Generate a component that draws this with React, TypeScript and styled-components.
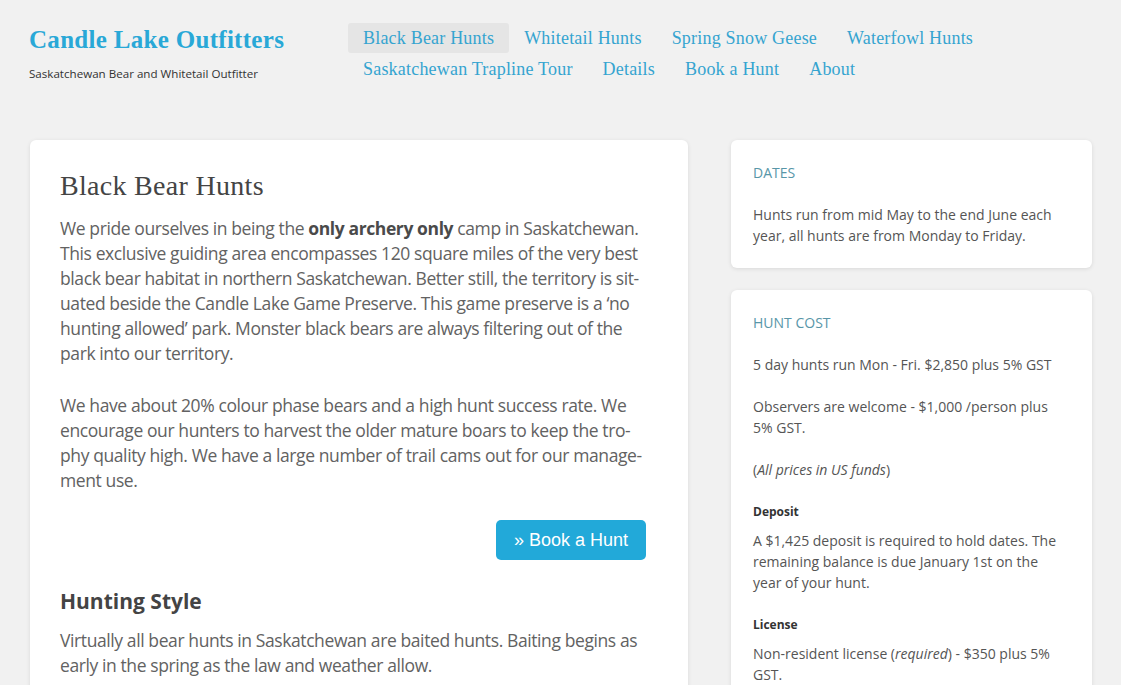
import styled, { createGlobalStyle } from 'styled-components'

const GlobalStyle = createGlobalStyle`
  html, body {
    margin: 0;
    padding: 0;
    background-color: #f1f1f1;
  }
  body {
    font-family: 'Open Sans', 'DejaVu Sans', sans-serif;
    color: #555;
  }
`

const StyledPage = styled.div`
  padding: 0 29px 0 30px;
`

const StyledHeader = styled.header`
  display: flex;
  align-items: flex-start;
  height: 140px;
`

const StyledBrand = styled.div`
  width: 318px;
  padding-top: 25px;
`

const StyledLogo = styled.a`
  display: block;
  margin-left: -1px;
  color: #29a8d7;
  font-family: 'Liberation Serif', serif;
  font-weight: 700;
  font-size: 25px;
  letter-spacing: 0.3px;
  line-height: 30px;
  text-decoration: none;
`

const StyledTagline = styled.p`
  margin: 11px 0 0 -1px;
  color: #333;
  font-size: 11.6px;
  font-stretch: 90%;
  line-height: 16px;
`

const StyledNav = styled.nav`
  display: flex;
  flex-wrap: wrap;
  row-gap: 1px;
  width: 744px;
  padding-top: 23px;
`

const StyledNavLink = styled.a<{ $active?: boolean }>`
  display: block;
  padding: 0 15px;
  border-radius: 3px;
  background-color: ${(props) => (props.$active ? '#e5e5e5' : 'transparent')};
  color: #35a4d0;
  font-family: 'Liberation Serif', serif;
  font-size: 18px;
  letter-spacing: 0.2px;
  line-height: 30px;
  text-decoration: none;
`

const StyledLayout = styled.div`
  display: grid;
  grid-template-columns: 658px 361px;
  column-gap: 43px;
  align-items: start;
`

const StyledCard = styled.article`
  border-radius: 6px;
  background-color: #fff;
  box-shadow: 0 1px 4px hsla(0, 0%, 0%, 0.1);
`

const StyledMain = styled(StyledCard)`
  padding: 28px 42px 40px 30px;
  min-height: 600px;
`

const StyledTitle = styled.h1`
  margin: 0 0 12px;
  color: #444;
  font-family: 'Liberation Serif', serif;
  font-weight: 400;
  font-size: 28px;
  letter-spacing: 0.3px;
  line-height: 36px;
`

const StyledText = styled.p`
  margin: 0 0 27px;
  color: #626262;
  font-size: 17.5px;
  letter-spacing: -0.4px;
  line-height: 25px;

  strong {
    color: #4a4a4a;
    font-weight: 700;
  }
`

const StyledAction = styled.div`
  display: flex;
  justify-content: flex-end;
  margin: 0 0 26px;
`

const StyledButton = styled.a`
  display: inline-block;
  padding: 0 18px;
  border-radius: 5px;
  background-color: #22a9d9;
  color: #fff;
  font-family: 'Liberation Sans', Arial, sans-serif;
  font-size: 18px;
  line-height: 40px;
  text-decoration: none;
`

const StyledSubtitle = styled.h2`
  margin: 0 0 12px;
  color: #444;
  font-size: 21px;
  font-weight: 700;
  line-height: 30px;
`

const StyledSidebar = styled.aside`
  display: flex;
  flex-direction: column;
  gap: 22px;
`

const StyledWidget = styled(StyledCard)`
  padding: 22px 24px 1px 22px;
`

const StyledWidgetTitle = styled.h3`
  margin: 0 0 21px;
  color: #5896a8;
  font-weight: 400;
  font-size: 14px;
  line-height: 21px;
  text-transform: uppercase;
`

const StyledWidgetText = styled.p`
  margin: 0 0 21px;
  color: #555;
  font-size: 14px;
  line-height: 21px;
`

const StyledWidgetLabel = styled.h4`
  margin: 0 0 8px;
  color: #333;
  font-weight: 700;
  font-size: 12px;
  line-height: 21px;
`

const navItems = [
  'Black Bear Hunts',
  'Whitetail Hunts',
  'Spring Snow Geese',
  'Waterfowl Hunts',
  'Saskatchewan Trapline Tour',
  'Details',
  'Book a Hunt',
  'About',
]

export default function App() {
  return (
    <>
      <GlobalStyle />
      <StyledPage>
        <StyledHeader>
          <StyledBrand>
            <StyledLogo href="#">Candle Lake Outfitters</StyledLogo>
            <StyledTagline>Saskatchewan Bear and Whitetail Outfitter</StyledTagline>
          </StyledBrand>
          <StyledNav>
            {navItems.map((item, index) => (
              <StyledNavLink key={item} href="#" $active={index === 0}>
                {item}
              </StyledNavLink>
            ))}
          </StyledNav>
        </StyledHeader>
        <StyledLayout>
          <StyledMain>
            <StyledTitle>Black Bear Hunts</StyledTitle>
            <StyledText>
              We pride ourselves in being the <strong>only archery only</strong> camp in
              Saskatchewan. This exclusive guiding area encompasses 120 square miles of the
              very best black bear habitat in northern Saskatchewan. Better still, the
              territory is sit{'\u00AD'}uated beside the Candle Lake Game Preserve. This game
              preserve is a ‘no hunting allowed’ park. Monster black bears are always
              filtering out of the park into our territory.
            </StyledText>
            <StyledText>
              We have about 20% colour phase bears and a high hunt success rate. We encourage
              our hunters to harvest the older mature boars to keep the tro{'\u00AD'}phy quality
              high. We have a large number of trail cams out for our manage{'\u00AD'}ment use.
            </StyledText>
            <StyledAction>
              <StyledButton href="#">» Book a Hunt</StyledButton>
            </StyledAction>
            <StyledSubtitle>Hunting Style</StyledSubtitle>
            <StyledText>
              Virtually all bear hunts in Saskatchewan are baited hunts. Baiting begins as
              early in the spring as the law and weather allow.
            </StyledText>
          </StyledMain>
          <StyledSidebar>
            <StyledWidget>
              <StyledWidgetTitle>Dates</StyledWidgetTitle>
              <StyledWidgetText>
                Hunts run from mid May to the end June each year, all hunts are from Monday
                to Friday.
              </StyledWidgetText>
            </StyledWidget>
            <StyledWidget>
              <StyledWidgetTitle>Hunt Cost</StyledWidgetTitle>
              <StyledWidgetText>5 day hunts run Mon - Fri. $2,850 plus 5% GST</StyledWidgetText>
              <StyledWidgetText>
                Observers are welcome - $1,000 /person plus 5% GST.
              </StyledWidgetText>
              <StyledWidgetText>
                (<em>All prices in US funds</em>)
              </StyledWidgetText>
              <StyledWidgetLabel>Deposit</StyledWidgetLabel>
              <StyledWidgetText>
                A $1,425 deposit is required to hold dates. The remaining balance is due
                January 1st on the year of your hunt.
              </StyledWidgetText>
              <StyledWidgetLabel>License</StyledWidgetLabel>
              <StyledWidgetText>
                Non-resident license (<em>required</em>) - $350 plus 5% GST.
              </StyledWidgetText>
            </StyledWidget>
          </StyledSidebar>
        </StyledLayout>
      </StyledPage>
    </>
  )
}
